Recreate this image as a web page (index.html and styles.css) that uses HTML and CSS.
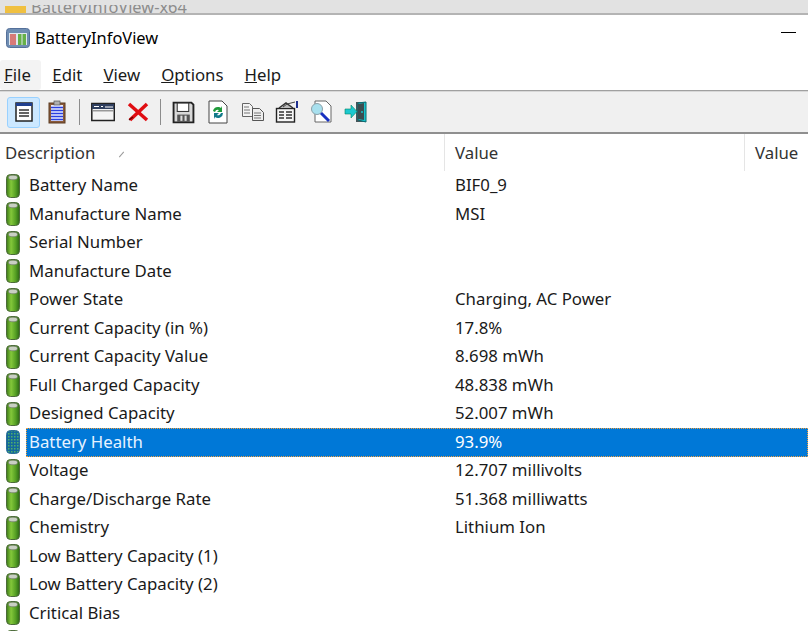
FILE: index.html
```html
<!DOCTYPE html>
<html lang="en">

<head>
  <meta charset="UTF-8">
  <meta name="viewport" content="width=device-width, initial-scale=1.0">
  <title>BatteryInfoView</title>
  <link rel="stylesheet" href="styles.css">
</head>

<body>
  <svg class="defs" width="0" height="0">
    <defs>
      <linearGradient id="batt" x1="0" x2="1" y1="0" y2="0">
        <stop offset="0" stop-color="#3c7a18" />
        <stop offset="0.35" stop-color="#84c83a" />
        <stop offset="0.7" stop-color="#56a024" />
        <stop offset="1" stop-color="#2c6814" />
      </linearGradient>
      <pattern id="dots" width="3" height="3" patternUnits="userSpaceOnUse">
        <rect width="3" height="3" fill="#14689c" />
        <rect width="1.500" height="1.500" fill="#4fb06a" />
      </pattern>
      <symbol id="battery" viewBox="0 0 16 24">
        <rect x="1.500" y="0.500" width="13" height="23" rx="4" fill="url(#batt)" stroke="#4c6b3a" />
        <ellipse cx="8" cy="3.500" rx="4.500" ry="2.300" fill="#c9cfc4" stroke="#6d7a66" stroke-width="0.700" />
      </symbol>
      <symbol id="battery-sel" viewBox="0 0 16 24">
        <rect x="1.500" y="0.500" width="13" height="23" rx="4" fill="url(#dots)" stroke="#2a6f96" />
      </symbol>
    </defs>
  </svg>

  <div class="folder-strip">
    <span class="folder-icon"></span>
    <span class="folder-name">BatteryInfoView-x64</span>
  </div>

  <div class="window">
    <div class="title-bar">
      <svg class="app-icon" width="24" height="20" viewBox="0 0 24 20">
        <rect x="0.500" y="0.500" width="23" height="19" rx="3" fill="#6f8db2" stroke="#54709a" />
        <rect x="3" y="5" width="18" height="12" fill="#dfe7ef" />
        <rect x="4" y="6" width="6" height="11" fill="#d87a78" />
        <rect x="12" y="6" width="3.500" height="11" fill="#66b048" />
        <rect x="16.500" y="6" width="3.500" height="11" fill="#66b048" />
      </svg>
      <span class="app-title">BatteryInfoView</span>
      <span class="minimize"></span>
    </div>

    <div class="menu-bar">
      <span class="menu-item menu-active"><u>F</u>ile</span>
      <span class="menu-item"><u>E</u>dit</span>
      <span class="menu-item"><u>V</u>iew</span>
      <span class="menu-item"><u>O</u>ptions</span>
      <span class="menu-item"><u>H</u>elp</span>
    </div>

    <div class="toolbar">
      <span class="tool tool-on">
        <svg width="18" height="20" viewBox="0 0 18 20">
          <rect x="1" y="1" width="16" height="18" fill="#fff" stroke="#222" stroke-width="1.500" />
          <rect x="1" y="1" width="16" height="3" fill="#1f3f8f" />
          <path d="M4 8h10M4 11h10M4 14h10" stroke="#333" stroke-width="1.500" />
        </svg>
      </span>
      <span class="tool">
        <svg width="20" height="24" viewBox="0 0 20 24">
          <rect x="2" y="3" width="16" height="20" fill="#8a5a3a" stroke="#5a3a20" />
          <rect x="4" y="5" width="12" height="16" fill="#e8ecff" />
          <path d="M4 7.500h12M4 10.500h12M4 13.500h12M4 16.500h12M4 19.500h12" stroke="#2a40e0" stroke-width="1.500" />
          <rect x="7" y="1" width="6" height="4" fill="#b0b0b0" stroke="#555" stroke-width="0.700" />
        </svg>
      </span>
      <span class="tool-sep"></span>
      <span class="tool">
        <svg width="24" height="20" viewBox="0 0 24 20">
          <rect x="0.800" y="1.500" width="22.500" height="17" fill="#f4f4f4" stroke="#222" stroke-width="1.500" />
          <rect x="1" y="2" width="22" height="5" fill="#2f3f5f" />
          <path d="M3 4.500h5M10 4.500h2M14 5h8" stroke="#fff" />
          <rect x="2" y="8" width="20" height="1.500" fill="#999" />
        </svg>
      </span>
      <span class="tool">
        <svg width="22" height="20" viewBox="0 0 22 20">
          <path d="M2 2 L20 18 M20 2 L3 18" stroke="#e00d12" stroke-width="3.500" />
          <path d="M2 18 L6 15" stroke="#600" stroke-width="1.500" />
        </svg>
      </span>
      <span class="tool-sep"></span>
      <span class="tool">
        <svg width="23" height="23" viewBox="0 0 22 22">
          <path d="M1.500 1.500h17l2 2v17h-19z" fill="#d8d8d8" stroke="#222" stroke-width="1.800" />
          <rect x="5" y="2" width="11" height="8" fill="#fff" stroke="#333" />
          <rect x="5" y="13" width="12" height="7" fill="#555" />
          <rect x="8" y="14" width="2" height="5" fill="#ddd" />
          <rect x="12" y="14" width="2" height="5" fill="#ddd" />
        </svg>
      </span>
      <span class="tool">
        <svg width="20" height="24" viewBox="0 0 20 24">
          <path d="M1 1h13l5 5v17h-18z" fill="#fff" stroke="#444" />
          <path d="M5 11a5 5 0 0 1 8-3l1-2v6h-5l2-2a3 3 0 0 0-4 2z" fill="#1f9a3a" />
          <path d="M15 13a5 5 0 0 1-8 4l-1 2v-6h5l-2 2a3 3 0 0 0 4-2z" fill="#127a8a" />
        </svg>
      </span>
      <span class="tool">
        <svg width="24" height="20" viewBox="0 0 24 20">
          <path d="M1.500 1.500h7l3 3v10h-10z" fill="#f4f4f4" stroke="#666" />
          <path d="M3 5h5M3 8h6M3 11h6" stroke="#777" />
          <path d="M11.500 6.500h7l4 4v8h-11z" fill="#eee" stroke="#555" />
          <path d="M13 11h7M13 13.500h7M13 16h7" stroke="#777" />
        </svg>
      </span>
      <span class="tool">
        <svg width="24" height="22" viewBox="0 0 24 22">
          <rect x="1.500" y="7.500" width="18" height="13.500" fill="#f6f6f6" stroke="#222" stroke-width="1.400" />
          <path d="M4 7l7-5 7 5" fill="#bbb" stroke="#333" stroke-width="1.500" />
          <path d="M12 3l8-2M8 6l4-3" stroke="#444" />
          <rect x="21" y="0" width="2" height="7" fill="#1d2f8f" />
          <path d="M4 11h5M11 11h6M4 14h5M11 14h6M4 17h5M11 17h6" stroke="#333" stroke-width="1.300" />
        </svg>
      </span>
      <span class="tool">
        <svg width="23" height="24" viewBox="0 0 23 24">
          <path d="M5 1h11l5 5v16h-16z" fill="#fff" stroke="#666" />
          <circle cx="7" cy="9" r="5.500" fill="#a8e0ee" stroke="#8ba0a8" />
          <path d="M11 13l8 8" stroke="#1730c0" stroke-width="3" />
        </svg>
      </span>
      <span class="tool">
        <svg width="24" height="24" viewBox="0 0 24 24">
          <path d="M12 2h10v20h-10z" fill="#44565a" />
          <path d="M14 3l8-1v20l-8-2z" fill="#18c4cc" stroke="#0a6a70" />
          <path d="M14 4l6-1v17l-6-1z" fill="#3c4c50" />
          <path d="M1 9h6v-4l6 6.500-6 6.500v-4h-6z" fill="#1cc8cf" stroke="#086" stroke-width="0.600" />
          <circle cx="18" cy="12" r="1" fill="#18c4cc" />
        </svg>
      </span>
    </div>

    <div class="list-header">
      <div class="col col-desc">Description<span class="sort-mark"></span></div>
      <div class="col col-value">Value</div>
      <div class="col col-extra">Value</div>
    </div>

    <div class="list">
      <div class="row"><svg class="batt"><use href="#battery" /></svg><span class="cell-desc">Battery Name</span><span class="cell-value">BIF0_9</span></div>
      <div class="row"><svg class="batt"><use href="#battery" /></svg><span class="cell-desc">Manufacture Name</span><span class="cell-value">MSI</span></div>
      <div class="row"><svg class="batt"><use href="#battery" /></svg><span class="cell-desc">Serial Number</span><span class="cell-value"></span></div>
      <div class="row"><svg class="batt"><use href="#battery" /></svg><span class="cell-desc">Manufacture Date</span><span class="cell-value"></span></div>
      <div class="row"><svg class="batt"><use href="#battery" /></svg><span class="cell-desc">Power State</span><span class="cell-value">Charging, AC Power</span></div>
      <div class="row"><svg class="batt"><use href="#battery" /></svg><span class="cell-desc">Current Capacity (in %)</span><span class="cell-value">17.8%</span></div>
      <div class="row"><svg class="batt"><use href="#battery" /></svg><span class="cell-desc">Current Capacity Value</span><span class="cell-value">8.698 mWh</span></div>
      <div class="row"><svg class="batt"><use href="#battery" /></svg><span class="cell-desc">Full Charged Capacity</span><span class="cell-value">48.838 mWh</span></div>
      <div class="row"><svg class="batt"><use href="#battery" /></svg><span class="cell-desc">Designed Capacity</span><span class="cell-value">52.007 mWh</span></div>
      <div class="row row-selected"><svg class="batt"><use href="#battery-sel" /></svg><div class="sel-bar"><span class="cell-desc">Battery Health</span><span class="cell-value">93.9%</span></div></div>
      <div class="row"><svg class="batt"><use href="#battery" /></svg><span class="cell-desc">Voltage</span><span class="cell-value">12.707 millivolts</span></div>
      <div class="row"><svg class="batt"><use href="#battery" /></svg><span class="cell-desc">Charge/Discharge Rate</span><span class="cell-value">51.368 milliwatts</span></div>
      <div class="row"><svg class="batt"><use href="#battery" /></svg><span class="cell-desc">Chemistry</span><span class="cell-value">Lithium Ion</span></div>
      <div class="row"><svg class="batt"><use href="#battery" /></svg><span class="cell-desc">Low Battery Capacity (1)</span><span class="cell-value"></span></div>
      <div class="row"><svg class="batt"><use href="#battery" /></svg><span class="cell-desc">Low Battery Capacity (2)</span><span class="cell-value"></span></div>
      <div class="row"><svg class="batt"><use href="#battery" /></svg><span class="cell-desc">Critical Bias</span><span class="cell-value"></span></div>
      <div class="row"><svg class="batt"><use href="#battery" /></svg><span class="cell-desc"></span><span class="cell-value"></span></div>
    </div>
  </div>
</body>

</html>
```

FILE: styles.css
```css
html,
body {
  height: 100%;
  margin: 0;
  overflow: hidden;
}

body {
  font-family: 'Noto Sans', 'Open Sans', sans-serif;
  font-size: 16.8px;
  color: #1a1a1a;
  background-color: #fff;
}

.defs {
  display: block;
  height: 0;
}

.folder-strip {
  display: flex;
  align-items: flex-end;
  gap: 5px;
  height: 13px;
  padding-left: 5px;
  overflow: hidden;
  background-color: #e2e2e2;
  border-bottom: 2px solid #b4b4b4;
}

.folder-icon {
  flex: none;
  width: 21px;
  height: 7px;
  background-color: #f0c040;
}

.folder-name {
  font-size: 16.4px;
  color: #8c8c8c;
  line-height: 13px;
  height: 8px;
  overflow: hidden;
  display: flex;
  align-items: flex-end;
}

.title-bar {
  display: flex;
  align-items: center;
  height: 45px;
  padding-left: 6px;
}

.app-icon {
  flex: none;
  margin-right: 5px;
}

.app-title {
  flex: 1;
  font-size: 16.4px;
  color: #000;
}

.minimize {
  width: 15px;
  height: 1px;
  margin-right: 12px;
  margin-top: -11px;
  background-color: #000;
}

.menu-bar {
  display: flex;
  height: 30px;
  align-items: center;
  border-bottom: 1px solid #a0a0a0;
}

.menu-item {
  padding: 0 10.5px;
  line-height: 30px;
}

.menu-active {
  padding: 0 10px 0 4px;
  margin-right: 1px;
  background-color: #f3f3f3;
  border-radius: 3px;
}

.toolbar {
  display: flex;
  align-items: center;
  height: 40px;
  padding-left: 7px;
  background-color: #f0f0f0;
  border-top: 1px solid #d8d8d8;
  border-bottom: 2px solid #8f8f8f;
}

.tool {
  display: flex;
  align-items: center;
  justify-content: center;
  width: 34.5px;
  height: 31px;
  flex: none;
}

.tool-on {
  width: 33px;
  background-color: #cce8ff;
  border: 1px solid #99d1ff;
  border-radius: 3px;
  box-sizing: border-box;
}

.tool-sep {
  width: 1px;
  height: 26px;
  margin: 0 6px 0 4.5px;
  background-color: #8c8c8c;
}

.list-header {
  display: flex;
  height: 37px;
  color: #333;
}

.col {
  display: flex;
  align-items: center;
  box-sizing: border-box;
  border-right: 1px solid #e5e5e5;
  padding-left: 5px;
}

.col-desc {
  width: 445px;
}

.col-value {
  width: 300px;
  padding-left: 10px;
}

.col-extra {
  flex: 1;
  border-right: none;
  padding-left: 10px;
}

.sort-mark {
  width: 7px;
  height: 1px;
  margin-left: 23px;
  margin-top: 3px;
  background-color: #999;
  transform: rotate(-50deg);
}

.list {
  padding-top: 0.5px;
}

.row {
  display: flex;
  align-items: center;
  height: 28.5px;
  padding-left: 5px;
}

.batt {
  flex: none;
  width: 16px;
  height: 24px;
  margin-right: 8px;
}

.cell-desc {
  flex: none;
  width: 426px;
  margin-bottom: 2px;
}

.cell-value {
  margin-bottom: 2px;
}

.sel-bar {
  display: flex;
  flex: 1;
  align-items: center;
  align-self: stretch;
  margin-left: -3px;
  padding-left: 3px;
  color: #fff;
  background-color: #0078d7;
  outline: 1px dotted #f0a040;
  outline-offset: -1px;
}

.sel-bar .cell-desc {
  color: #e6f2ff;
}
```
